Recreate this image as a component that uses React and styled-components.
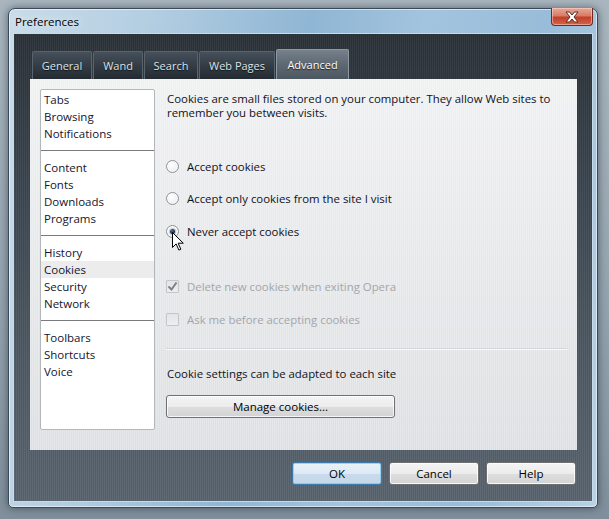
import React from "react";
import styled, { createGlobalStyle } from "styled-components";

const GlobalStyle = createGlobalStyle`
  html, body {
    margin: 0;
    padding: 0;
  }
  body {
    font-family: "Open Sans", "Noto Sans", sans-serif;
    font-size: 11px;
    background: #97a6b1;
  }
`;

const Desktop = styled.div`
  width: 609px;
  height: 519px;
  box-sizing: border-box;
  padding: 8px 11px 11px 8px;
  background: linear-gradient(180deg, #a9b6bf 0%, #93a3ae 60%, #7f8f9b 100%);
`;

const Window = styled.div`
  position: relative;
  width: 590px;
  height: 500px;
  box-sizing: border-box;
  display: flex;
  flex-direction: column;
  padding: 0 4px 5px 4px;
  border: 1px solid #3b4a56;
  border-radius: 7px 7px 5px 5px;
  background: linear-gradient(100deg, #cadcea 0%, #b2cde1 22%, #8fb6d4 45%, #a3c4de 62%, #98bcd9 80%, #b8d2e6 100%);
  box-shadow: 0 0 9px rgba(20, 30, 40, 0.55), inset 0 0 0 1px rgba(255, 255, 255, 0.55);
`;

const TitleBar = styled.div`
  height: 26px;
  display: flex;
  align-items: flex-start;
  justify-content: space-between;
`;

const Title = styled.div`
  padding: 5px 0 0 2px;
  font-size: 11.5px;
  color: #000;
  text-shadow: 0 0 6px rgba(255, 255, 255, 0.9);
`;

const CloseButton = styled.div`
  width: 42px;
  height: 18px;
  margin-top: -1px;
  box-sizing: border-box;
  border: 1px solid #6e2b1f;
  border-top: none;
  border-radius: 0 0 4px 4px;
  background: linear-gradient(180deg, #e6a99b 0%, #d77d66 45%, #c1402a 55%, #d4634a 100%);
  box-shadow: inset 0 0 0 1px rgba(255, 220, 210, 0.5);
  display: flex;
  align-items: center;
  justify-content: center;
`;

const Client = styled.div`
  flex: 1;
  display: flex;
  flex-direction: column;
  padding: 15px 15px 16px 16px;
  border: 1px solid #c6dcec;
  background:
    repeating-linear-gradient(90deg, rgba(255, 255, 255, 0.035) 0 1px, rgba(0, 0, 0, 0.05) 1px 2px),
    linear-gradient(180deg, #2b3238 0%, #3e4852 35%, #4f5a64 70%, #5a6570 100%);
`;

const TabBar = styled.div`
  display: flex;
  align-items: flex-end;
  gap: 1px;
  height: 30px;
  padding-left: 2px;
`;

const Tab = styled.div`
  width: ${(p) => p.$width}px;
  height: ${(p) => (p.$active ? "30px" : "28px")};
  box-sizing: border-box;
  display: flex;
  align-items: center;
  justify-content: center;
  font-size: 11px;
  color: ${(p) => (p.$active ? "#ffffff" : "#dde3e8")};
  text-shadow: 0 1px 1px rgba(0, 0, 0, 0.7);
  border: 1px solid ${(p) => (p.$active ? "#8c98a3" : "#59636d")};
  border-bottom: none;
  border-radius: 2px 2px 0 0;
  background: ${(p) =>
    p.$active
      ? "linear-gradient(180deg, #76818c 0%, #5d6873 50%, #4c5762 100%)"
      : "linear-gradient(180deg, #46505a 0%, #323b44 55%, #232a31 100%)"};
`;

const Panel = styled.div`
  height: 371px;
  box-sizing: border-box;
  display: grid;
  grid-template-columns: 115px 1fr;
  column-gap: 11px;
  padding: 10px 10px 0 10px;
  background:
    repeating-linear-gradient(90deg, rgba(255, 255, 255, 0.25) 0 1px, transparent 1px 2px),
    linear-gradient(180deg, #eff0f1 0%, #e6e8ea 45%, #dcdfe2 100%);
`;

const SectionList = styled.div`
  height: 341px;
  box-sizing: border-box;
  padding-top: 1px;
  border: 1px solid #b3b7ba;
  border-radius: 2px;
  background: #ffffff;
`;

const ListItem = styled.div`
  height: 17px;
  line-height: 17px;
  padding-left: 3px;
  font-size: 11.5px;
  color: #14142e;
  background: ${(p) => (p.$selected ? "#ececec" : "transparent")};
`;

const ListSeparator = styled.div`
  height: 1px;
  margin: 8px 0;
  background: #7a7a7a;
`;

const Content = styled.div`
  display: flex;
  flex-direction: column;
`;

const Description = styled.p`
  margin: 3px 0 0 1px;
  font-size: 11.4px;
  line-height: 14px;
  color: #111122;
`;

const OptionRow = styled.label`
  position: relative;
  display: flex;
  align-items: center;
  gap: 8px;
  height: 16px;
  margin-top: ${(p) => p.$gap}px;
  font-size: 11.4px;
  color: ${(p) => (p.$disabled ? "#a3a6a9" : "#111122")};
`;

const Radio = styled.span`
  position: relative;
  width: 13px;
  height: 13px;
  box-sizing: border-box;
  border-radius: 50%;
  border: 1px solid #8d9296;
  background: radial-gradient(circle at 40% 35%, #ffffff 0%, #f1f2f3 55%, #d6d9dc 100%);
  box-shadow: inset 0 0 1px 1px rgba(255, 255, 255, 0.8);

  &::after {
    content: "";
    display: ${(p) => (p.$checked ? "block" : "none")};
    position: absolute;
    left: 3px;
    top: 3px;
    width: 5px;
    height: 5px;
    border-radius: 50%;
    background: radial-gradient(circle at 40% 35%, #5a6d8a 0%, #16223a 70%);
    box-shadow: 0 0 1px 1px rgba(90, 130, 190, 0.45);
  }
`;

const CheckBox = styled.span`
  width: 13px;
  height: 13px;
  box-sizing: border-box;
  border: 1px solid #c4c7ca;
  border-radius: 1px;
  background: linear-gradient(180deg, #e2e4e6, #eceef0);
  display: flex;
  align-items: center;
  justify-content: center;
`;

const Cursor = styled.svg`
  position: absolute;
  left: 6px;
  top: 9px;
`;

const Rule = styled.div`
  height: 1px;
  margin: 22px 0 0 0;
  background: #f7f8f9;
  box-shadow: 0 -1px 0 rgba(180, 186, 192, 0.35);
`;

const Note = styled.div`
  margin: 16px 0 0 1px;
  height: 16px;
  line-height: 16px;
  font-size: 11.4px;
  color: #111122;
`;

const PushButton = styled.button`
  width: ${(p) => p.$width}px;
  height: 23px;
  margin-top: ${(p) => p.$top || 0}px;
  padding: 0;
  box-sizing: border-box;
  font-family: inherit;
  font-size: 11.5px;
  color: #000;
  border: 1px solid ${(p) => (p.$default ? "#3d7bad" : "#707070")};
  border-radius: 3px;
  background: ${(p) =>
    p.$default
      ? "linear-gradient(180deg, #eaf2f9 0%, #dde9f4 50%, #c9dbec 51%, #c4d8ea 100%)"
      : "linear-gradient(180deg, #f4f4f4 0%, #ececec 50%, #dedede 51%, #d3d3d3 100%)"};
  box-shadow: inset 0 0 0 1px ${(p) => (p.$default ? "rgba(120, 200, 240, 0.7)" : "rgba(255, 255, 255, 0.8)")};
`;

const ButtonRow = styled.div`
  display: flex;
  justify-content: flex-end;
  gap: 7px;
  margin-top: 12px;
  padding-right: 1px;
`;

const groups = [
  ["Tabs", "Browsing", "Notifications"],
  ["Content", "Fonts", "Downloads", "Programs"],
  ["History", "Cookies", "Security", "Network"],
  ["Toolbars", "Shortcuts", "Voice"],
];

const tabs = [
  { label: "General", width: 60 },
  { label: "Wand", width: 50 },
  { label: "Search", width: 54 },
  { label: "Web Pages", width: 76 },
  { label: "Advanced", width: 73 },
];

const App = () => {
  return (
    <>
      <GlobalStyle />
      <Desktop>
        <Window>
          <TitleBar>
            <Title>Preferences</Title>
            <CloseButton>
              <svg width="14" height="12" viewBox="0 0 14 12">
                <path
                  d="M1 1h3.5L7 4l2.5-3H13L9 6l4 5H9.5L7 8l-2.5 3H1l4-5z"
                  fill="#ffffff"
                  stroke="#5a2a22"
                  strokeWidth="1"
                  strokeLinejoin="round"
                />
              </svg>
            </CloseButton>
          </TitleBar>
          <Client>
            <TabBar>
              {tabs.map((t) => (
                <Tab key={t.label} $width={t.width} $active={t.label === "Advanced"}>
                  {t.label}
                </Tab>
              ))}
            </TabBar>
            <Panel>
              <SectionList>
                {groups.map((g, i) => (
                  <React.Fragment key={i}>
                    {i > 0 && <ListSeparator />}
                    {g.map((item) => (
                      <ListItem key={item} $selected={item === "Cookies"}>
                        {item}
                      </ListItem>
                    ))}
                  </React.Fragment>
                ))}
              </SectionList>
              <Content>
                <Description>
                  Cookies are small files stored on your computer. They allow Web sites to
                  <br />
                  remember you between visits.
                </Description>
                <OptionRow $gap={38}>
                  <Radio />
                  Accept cookies
                </OptionRow>
                <OptionRow $gap={16}>
                  <Radio />
                  Accept only cookies from the site I visit
                </OptionRow>
                <OptionRow $gap={17}>
                  <Radio $checked />
                  Never accept cookies
                  <Cursor width="12" height="19" viewBox="0 0 12 19">
                    <path
                      d="M0.5 0.5v15l3.6-3.6 2.8 6.2 2-0.9-2.8-6h5.2z"
                      fill="#ffffff"
                      stroke="#000000"
                      strokeWidth="1"
                      strokeLinejoin="miter"
                    />
                  </Cursor>
                </OptionRow>
                <OptionRow $gap={39} $disabled>
                  <CheckBox>
                    <svg width="11" height="11" viewBox="0 0 11 11">
                      <path d="M1.5 5.5l3 3 5-7" fill="none" stroke="#7d8185" strokeWidth="2" />
                    </svg>
                  </CheckBox>
                  Delete new cookies when exiting Opera
                </OptionRow>
                <OptionRow $gap={17} $disabled>
                  <CheckBox />
                  Ask me before accepting cookies
                </OptionRow>
                <Rule />
                <Note>Cookie settings can be adapted to each site</Note>
                <PushButton $width={229} $top={13}>
                  Manage cookies...
                </PushButton>
              </Content>
            </Panel>
            <ButtonRow>
              <PushButton $width={90} $default>
                OK
              </PushButton>
              <PushButton $width={90}>Cancel</PushButton>
              <PushButton $width={90}>Help</PushButton>
            </ButtonRow>
          </Client>
        </Window>
      </Desktop>
    </>
  );
};

export default App;
